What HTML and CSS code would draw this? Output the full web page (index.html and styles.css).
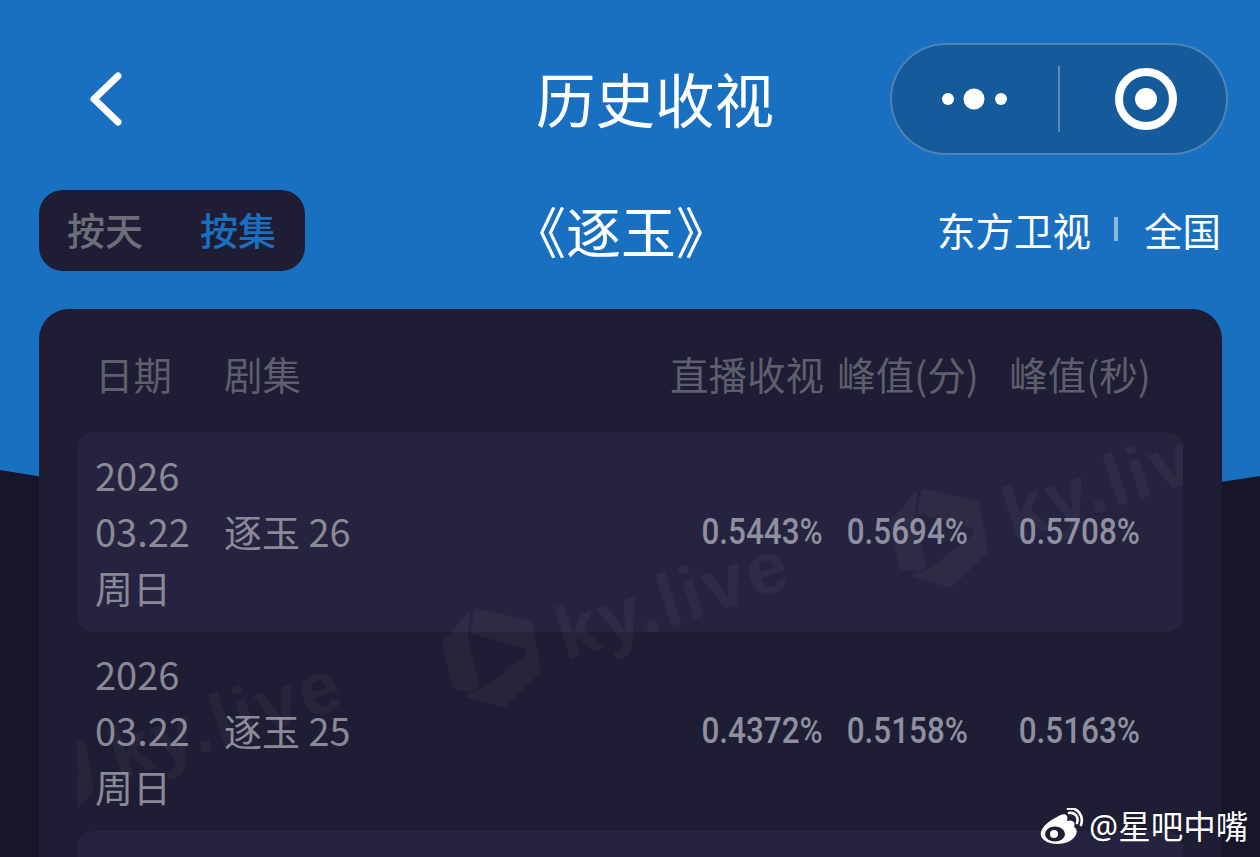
FILE: index.html
```html
<!DOCTYPE html>
<html lang="zh-CN">
<head>
  <meta charset="UTF-8" />
  <meta name="viewport" content="width=device-width, initial-scale=1.0"/>
  <title>历史收视</title>
  <link rel="stylesheet" href="styles.css">
</head>
<body>
  <div class="hero-bg"></div>

  <div class="page">
    <!-- Nav bar -->
    <div class="nav">
      <svg class="back" width="34" height="56" viewBox="0 0 34 56">
        <path d="M30 5 L6 28 L30 51" fill="none" stroke="#fff" stroke-width="7" stroke-linecap="round" stroke-linejoin="round"/>
      </svg>
      <h1 class="nav-title">历史收视</h1>
      <div class="capsule">
        <svg class="capsule-dots" width="72" height="24" viewBox="0 0 72 24">
          <circle cx="6" cy="12" r="6" fill="#fff"/>
          <circle cx="32" cy="12" r="10.5" fill="#fff"/>
          <circle cx="59" cy="12" r="6" fill="#fff"/>
        </svg>
        <span class="capsule-line"></span>
        <svg class="capsule-ring" width="62" height="62" viewBox="0 0 62 62">
          <circle cx="31" cy="31" r="27" fill="none" stroke="#fff" stroke-width="8"/>
          <circle cx="31" cy="31" r="11" fill="#fff"/>
        </svg>
      </div>
    </div>

    <!-- Tabs + drama name + channel -->
    <div class="toolbar">
      <div class="tabs">
        <span class="tab">按天</span>
        <span class="tab active">按集</span>
      </div>
      <div class="drama">《逐玉》</div>
      <div class="scope">
        <span>东方卫视</span>
        <i class="scope-line"></i>
        <span>全国</span>
      </div>
    </div>

    <!-- Ratings table -->
    <div class="card">
      <div class="row head">
        <div class="cell-date">日期</div>
        <div>剧集</div>
        <div class="cell-rate">直播收视</div>
        <div class="cell-mid">峰值(分)</div>
        <div class="cell-mid">峰值(秒)</div>
      </div>

      <div class="table-body">
        <div class="row item odd">
          <div class="cell-date">2026<br>03.22<br>周日</div>
          <div>逐玉 26</div>
          <div class="cell-rate"><span class="num">0.5443%</span></div>
          <div class="cell-mid"><span class="num">0.5694%</span></div>
          <div class="cell-mid"><span class="num">0.5708%</span></div>
        </div>
        <div class="row item">
          <div class="cell-date">2026<br>03.22<br>周日</div>
          <div>逐玉 25</div>
          <div class="cell-rate"><span class="num">0.4372%</span></div>
          <div class="cell-mid"><span class="num">0.5158%</span></div>
          <div class="cell-mid"><span class="num">0.5163%</span></div>
        </div>
        <div class="row item odd"></div>

        <div class="mark mark-a">
          <svg class="mark-logo" width="100" height="106" viewBox="0 0 100 106"><use href="#kyLogo"/></svg>
          <span class="mark-text">ky.live</span>
        </div>
        <div class="mark mark-b">
          <svg class="mark-logo" width="100" height="106" viewBox="0 0 100 106"><use href="#kyLogo"/></svg>
          <span class="mark-text">ky.live</span>
        </div>
        <div class="mark mark-c">
          <svg class="mark-logo" width="100" height="106" viewBox="0 0 100 106"><use href="#kyLogo"/></svg>
          <span class="mark-text">ky.live</span>
        </div>
      </div>
    </div>
  </div>

  <!-- Weibo stamp -->
  <div class="stamp">
    <svg width="46" height="38" viewBox="0 0 46 38">
      <path d="M18 9 C25 4 30 6 28 13 C34 11 37 15 35 19 C40 21 38 30 29 34 C19 38 5 36 2 28 C0 21 9 13 18 9 Z" fill="#fff"/>
      <ellipse cx="16" cy="26" rx="10" ry="7.5" fill="#1e1d33"/>
      <circle cx="15" cy="26" r="4" fill="#fff"/>
      <path d="M30 5 C36 4 40 9 38 15" fill="none" stroke="#fff" stroke-width="2.6" stroke-linecap="round"/>
      <path d="M29 0.8 C39 -1 45 8 42 17" fill="none" stroke="#fff" stroke-width="2.6" stroke-linecap="round"/>
    </svg>
    <span>@星吧中嘴</span>
  </div>

  <svg class="defs" width="0" height="0">
    <defs>
      <g id="kyLogo" transform="rotate(18 50 53)" fill="#fff" stroke="#fff" stroke-width="4" stroke-linejoin="round">
        <polygon points="36,5 90,17 98,60 85,41 32,26"/>
        <polygon points="28,9 4,38 14,82 30,84 37,79 25,32"/>
        <polygon points="88,50 98,66 63,100 27,90 43,85"/>
      </g>
    </defs>
  </svg>
</body>
</html>
```

FILE: styles.css
```css
body {
  font-family: "Noto Sans CJK SC", "Noto Sans", sans-serif;
  background-color: #16152a;
  margin: 0;
  height: 857px;
  overflow: hidden;
  position: relative;
  color: #fff;
}

.hero-bg {
  position: absolute;
  top: 0;
  left: 0;
  width: 100%;
  height: 600px;
  background-color: #1a70c0;
  clip-path: polygon(0 0, 100% 0, 100% 476px, 50% 572px, 0 470px);
}

.page {
  position: relative;
  height: 857px;
  box-sizing: border-box;
  padding-top: 43px;
  overflow: hidden;
}

.defs {
  position: absolute;
}

/* nav */
.nav {
  display: flex;
  align-items: center;
  height: 112px;
  padding: 0 32px 0 88px;
}

.back {
  flex: none;
}

.nav-title {
  margin: 0 0 2px 414px;
  font-size: 59.5px;
  font-weight: 400;
  line-height: 1;
  white-space: nowrap;
}

.capsule {
  margin-left: auto;
  width: 338px;
  height: 112px;
  box-sizing: border-box;
  flex: none;
  display: flex;
  align-items: center;
  background-color: #155a9a;
  border: 2px solid rgba(255, 255, 255, 0.25);
  border-radius: 56px;
}

.capsule-dots {
  margin-left: 50px;
}

.capsule-line {
  width: 2px;
  height: 66px;
  margin-left: 44px;
  background-color: rgba(255, 255, 255, 0.3);
}

.capsule-ring {
  margin-left: 55px;
}

/* toolbar */
.toolbar {
  display: flex;
  align-items: center;
  height: 81px;
  margin-top: 35px;
  padding: 0 39px 0 39px;
  position: relative;
}

.tabs {
  display: flex;
  gap: 57px;
  height: 81px;
  box-sizing: border-box;
  align-items: center;
  padding: 0 29px 3px 28px;
  background-color: #1e1d33;
  border-radius: 24px;
  font-size: 38px;
  font-weight: 500;
}

.tab {
  color: #6e6d7a;
  line-height: 1;
}

.tab.active {
  color: #1a70c0;
}

.drama {
  position: absolute;
  left: 511px;
  font-size: 55px;
  line-height: 1;
  white-space: nowrap;
  padding-bottom: 3px;
}

.scope {
  margin-left: auto;
  display: flex;
  align-items: center;
  font-size: 38.5px;
  line-height: 1;
  padding-bottom: 3px;
}

.scope-line {
  width: 4px;
  height: 24px;
  margin: 0 26px 0 23px;
  background-color: rgba(255, 255, 255, 0.5);
}

/* table */
.card {
  margin: 38px 38px 0 39px;
  height: 700px;
  padding: 0 39px 0 38px;
  background-color: #1e1d33;
  border-radius: 30px 30px 0 0;
}

.row {
  display: grid;
  grid-template-columns: 147px 1fr 160px 156px 188px;
  align-items: center;
  padding-right: 9px;
  font-size: 38px;
}

.head {
  height: 123px;
  color: #5f5e6c;
  font-size: 38.5px;
  line-height: 1;
  padding-top: 6px;
  box-sizing: border-box;
  white-space: nowrap;
}

.table-body {
  position: relative;
  overflow: hidden;
  height: 577px;
}

.item {
  height: 199.5px;
  box-sizing: border-box;
  padding-bottom: 2px;
  color: #8a8995;
  line-height: 56px;
  border-radius: 16px;
}

.item.odd {
  background-color: #25233f;
}

.cell-date {
  padding-left: 18px;
}

.cell-rate {
  text-align: right;
  padding-right: 7px;
}

.cell-mid {
  text-align: center;
  white-space: nowrap;
}

/* the reference digits are a narrow DIN cut, no such family here */
.num {
  display: inline-block;
  font-family: Roboto, sans-serif;
  font-weight: 500;
  font-size: 37px;
  line-height: 1;
  color: #8e8f9f;
  transform: translate(-1px, -3px) scaleX(0.85);
}

.cell-rate .num {
  transform: translate(0, -3px) scaleX(0.85);
  transform-origin: right center;
}

/* watermark */
.mark {
  position: absolute;
  display: flex;
  align-items: center;
  gap: 21px;
  color: #fff;
  opacity: 0.035;
  transform: rotate(-18deg);
  pointer-events: none;
}

.mark-logo {
  overflow: visible;
}

.mark-text {
  font-family: "Liberation Sans", sans-serif;
  font-weight: 700;
  font-size: 74px;
  letter-spacing: 3px;
  line-height: 1;
}

.mark-a {
  left: 357px;
  top: 133px;
}

.mark-b {
  left: 804px;
  top: 13px;
}

.mark-c {
  left: -90px;
  top: 253px;
}

/* stamp */
.stamp {
  position: absolute;
  left: 1039px;
  top: 806px;
  display: flex;
  align-items: center;
  gap: 4px;
  font-family: "Noto Sans", "Noto Sans CJK SC", sans-serif;
  font-size: 32.5px;
  line-height: 42px;
  white-space: nowrap;
  text-shadow: 0 0 2px rgba(0, 0, 0, 0.4);
}
```
